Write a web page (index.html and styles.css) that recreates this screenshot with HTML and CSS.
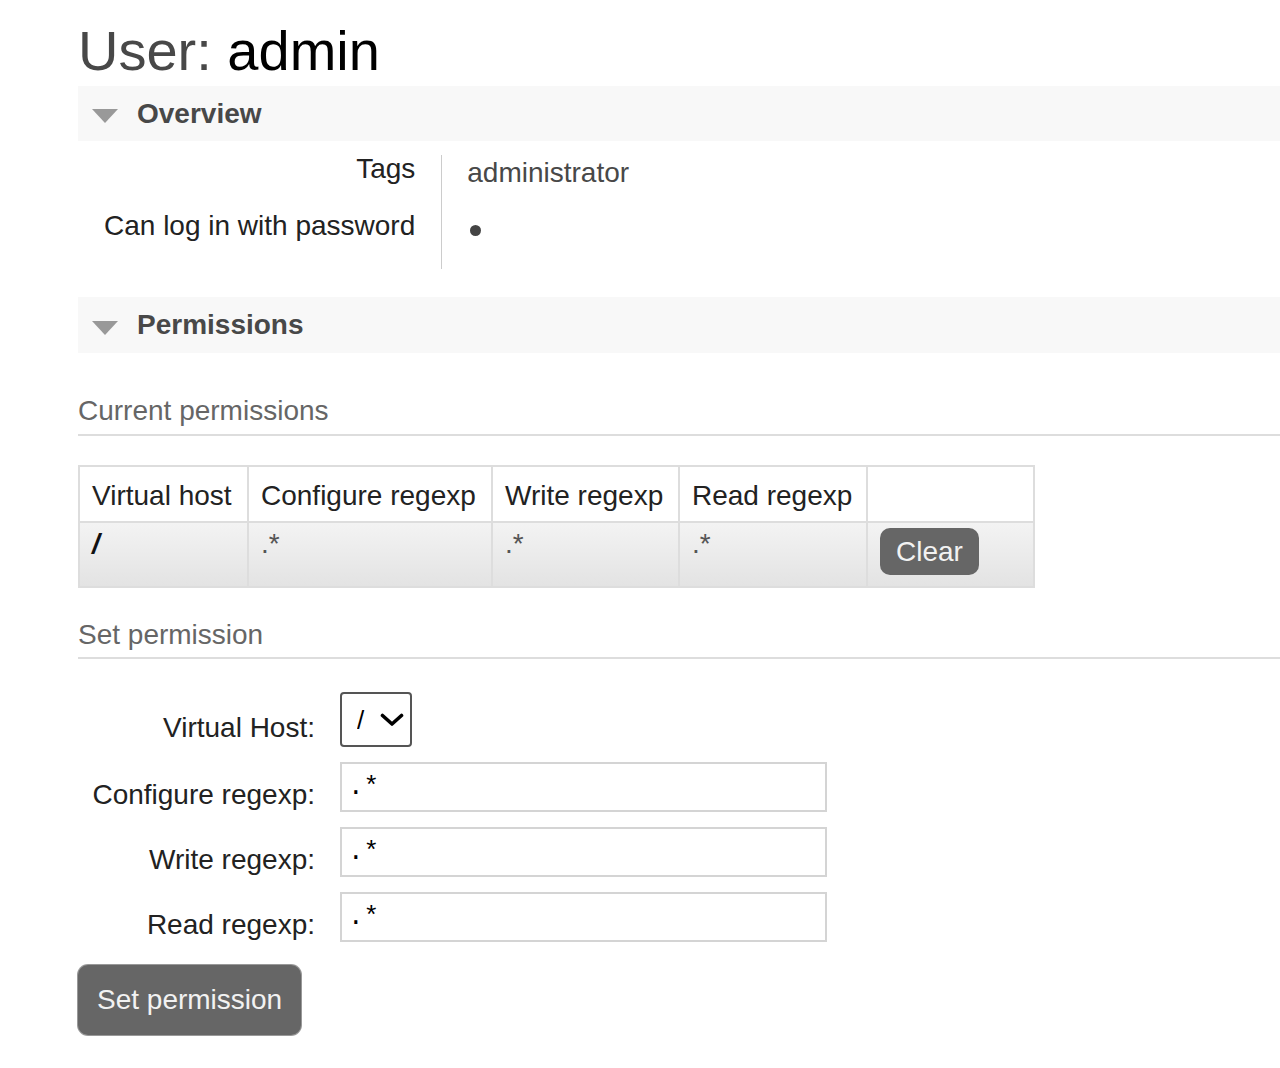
FILE: index.html
```html
<!DOCTYPE html>
<html lang="en">
<head>
<meta charset="utf-8">
<title>User: admin</title>
<link rel="stylesheet" href="styles.css">
</head>
<body>
<div class="page">
  <h1 class="title">User: <span class="title-name">admin</span></h1>

  <section class="section">
    <h2 class="section-head"><span class="tri"></span>Overview</h2>
    <table class="facts">
      <tr><th>Tags</th><td class="muted">administrator</td></tr>
      <tr><th>Can log in with password</th><td><span class="dot"></span></td></tr>
    </table>
  </section>

  <section class="section section-perms">
    <h2 class="section-head"><span class="tri"></span>Permissions</h2>

    <h3 class="sub-head">Current permissions</h3>
    <table class="list">
      <thead>
        <tr>
          <th class="c1">Virtual host</th>
          <th class="c2">Configure regexp</th>
          <th class="c3">Write regexp</th>
          <th class="c4">Read regexp</th>
          <th class="c5"></th>
        </tr>
      </thead>
      <tbody>
        <tr>
          <td><span class="vhost">/</span></td>
          <td class="rx">.*</td>
          <td class="rx">.*</td>
          <td class="rx">.*</td>
          <td><button class="btn btn-small" type="button">Clear</button></td>
        </tr>
      </tbody>
    </table>

    <h3 class="sub-head sub-head-set">Set permission</h3>
    <form class="perm-form">
      <label class="perm-label" for="vh">Virtual Host:</label>
      <span class="select-wrap">
        <select id="vh" class="select"><option>/</option></select>
        <svg class="chev" viewBox="0 0 24 14" width="24" height="14" aria-hidden="true"><path d="M2.5 2.5 L12 11 L21.5 2.5" fill="none" stroke="#000" stroke-width="3.6" stroke-linecap="round" stroke-linejoin="round"/></svg>
      </span>

      <label class="perm-label" for="cfg">Configure regexp:</label>
      <input id="cfg" class="text-input" type="text" value=".*">

      <label class="perm-label" for="wr">Write regexp:</label>
      <input id="wr" class="text-input" type="text" value=".*">

      <label class="perm-label" for="rd">Read regexp:</label>
      <input id="rd" class="text-input" type="text" value=".*">
    </form>
    <button class="btn btn-large" type="button">Set permission</button>
  </section>
</div>
</body>
</html>
```

FILE: styles.css
```css
html, body {
  margin: 0;
  padding: 0;
  background: #fff;
}

body {
  font-family: "Liberation Sans", Arial, sans-serif;
  font-size: 28px;
  line-height: 32px;
  color: #222;
  overflow: hidden;
}

.page {
  padding: 19px 0 40px 78px;
}

.title {
  margin: 0;
  font-size: 56px;
  line-height: 64px;
  font-weight: normal;
  color: #484848;
}

.title-name {
  color: #000;
}

.section-head {
  margin: 3px 0 0;
  height: 55px;
  display: flex;
  align-items: center;
  gap: 19px;
  padding-left: 14px;
  background: #f8f8f8;
  font-size: 28px;
  line-height: 32px;
  font-weight: bold;
  color: #484848;
}

.section-perms {
  margin-top: 28px;
}

.section-perms .section-head {
  height: 56px;
}

.tri {
  width: 0;
  height: 0;
  border-left: 13px solid transparent;
  border-right: 13px solid transparent;
  border-top: 14px solid #999;
  margin-top: 5px;
}

/* overview facts */
.facts {
  margin-top: 14px;
  border-collapse: collapse;
  border-spacing: 0;
}

.facts th,
.facts td {
  height: 57px;
  box-sizing: border-box;
  vertical-align: top;
  line-height: 28px;
}

.facts th {
  padding: 0 26px 0 26px;
  text-align: right;
  font-weight: normal;
  color: #222;
  white-space: nowrap;
}

.facts td {
  padding: 4px 0 0 25px;
  border-left: 1px solid #ccc;
}

.muted {
  color: #484848;
}

.dot {
  display: block;
  width: 11px;
  height: 11px;
  border-radius: 50%;
  background: #444;
  margin: 9px 0 0 3px;
}

/* sub headings */
.sub-head {
  margin: 42px 0 0;
  padding-bottom: 7px;
  border-bottom: 2px solid #ddd;
  font-size: 28px;
  line-height: 32px;
  font-weight: normal;
  color: #666;
}

.sub-head-set {
  margin-top: 31px;
  padding-bottom: 6px;
}

/* permissions list */
.list {
  margin-top: 29px;
  border-collapse: separate;
  border-spacing: 0;
  border-top: 2px solid #ddd;
  border-left: 2px solid #ddd;
  table-layout: fixed;
  width: 957px;
}

.list th,
.list td {
  box-sizing: border-box;
  border-right: 2px solid #ddd;
  border-bottom: 2px solid #ddd;
  text-align: left;
  vertical-align: top;
  white-space: nowrap;
}

.list th {
  padding: 13px 12px 9px;
  font-weight: normal;
  color: #222;
  background: #fff;
}

.list td {
  padding: 5px 12px 11px;
  background: linear-gradient(to bottom, #f3f3f3, #e3e3e3);
  color: #555;
}

.list .c1 { width: 169px; }
.list .c2 { width: 244px; }
.list .c3 { width: 187px; }
.list .c4 { width: 188px; }
.list .c5 { width: 167px; }

.vhost {
  font-weight: bold;
  font-style: italic;
  color: #111;
}

.rx {
  color: #555;
}

/* buttons */
.btn {
  display: inline-block;
  border: none;
  background: #666;
  color: #f2f2f2;
  font-family: "Liberation Sans", Arial, sans-serif;
  font-size: 28px;
  line-height: 32px;
  border-radius: 10px;
  cursor: pointer;
}

.btn-small {
  height: 47px;
  padding: 0 16px;
  display: block;
}

.btn-large {
  display: block;
  margin-top: 23px;
  height: 70px;
  padding: 0 19px;
  box-shadow: 0 0 0 1px #999;
}

/* form */
.perm-form {
  margin-top: 33px;
  display: grid;
  grid-template-columns: 237px 487px;
  column-gap: 25px;
  row-gap: 15px;
  align-items: center;
}

.perm-label {
  text-align: right;
  padding-top: 16px;
  color: #222;
  white-space: nowrap;
}

.select-wrap {
  position: relative;
  justify-self: start;
  display: block;
  width: 72px;
  height: 55px;
}

.select {
  -webkit-appearance: none;
  appearance: none;
  display: block;
  width: 72px;
  height: 55px;
  box-sizing: border-box;
  border: 2px solid #555;
  border-radius: 4px;
  background: #fff;
  padding: 0 0 0 15px;
  font-family: "Liberation Sans", Arial, sans-serif;
  font-size: 26px;
  color: #000;
}

.chev {
  position: absolute;
  right: 8px;
  top: 21px;
  pointer-events: none;
}

.text-input {
  display: block;
  width: 487px;
  height: 50px;
  box-sizing: border-box;
  border: 2px solid #d4d4d4;
  padding: 0 6px;
  font-family: "Liberation Mono", "Courier New", monospace;
  font-size: 26px;
  color: #000;
  background: #fff;
}
```
